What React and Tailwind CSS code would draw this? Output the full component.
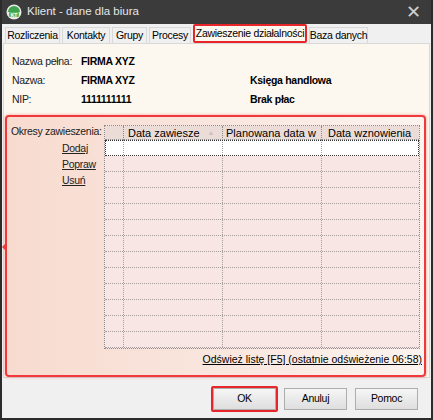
const tabs = [
  { label: "Rozliczenia", w: "w-[55px]" },
  { label: "Kontakty", w: "w-[48px]" },
  { label: "Grupy", w: "w-[35px]" },
  { label: "Procesy", w: "w-[42px]" },
  { label: "Zawieszenie działalności", w: "w-[114px]", active: true },
  { label: "Baza danych", w: "w-[59px]" },
];

const rows = Array.from({ length: 13 });

function AppIcon() {
  return (
    <svg width="16" height="16" viewBox="0 0 16 16">
      <circle cx="8" cy="8" r="7.5" fill="#e8e8e8" />
      <path d="M2 8a6 6 0 0 1 12 0z" fill="#3fa34d" />
      <rect x="3" y="8" width="10" height="5" rx="1" fill="#5cb85c" />
      <text x="8" y="12.5" fontSize="5" textAnchor="middle" fill="#fff" fontFamily="Liberation Sans, sans-serif" fontWeight="bold">
        KT
      </text>
    </svg>
  );
}

function Btn({ children, highlight }) {
  const inner = (
    <div className="flex h-[22px] w-[63px] items-center justify-center border border-[#adadad] bg-linear-to-b from-[#f6f6f6] to-[#dedede] text-[10.5px] text-black">
      {children}
    </div>
  );
  if (highlight) {
    return <div className="rounded-[2px] border-2 border-[#e8262a] p-0">{inner}</div>;
  }
  return <div className="p-[2px]">{inner}</div>;
}

export default function App() {
  return (
    <div
      className="flex h-[420px] w-[433px] flex-col whitespace-nowrap bg-[#2b2b2b] px-[2px] pb-[2px] tracking-[-0.3px]"
      style={{ fontFamily: '"Liberation Sans", Arial, sans-serif' }}
    >
      {/* title bar */}
      <div className="flex h-[24px] items-center bg-[#3b3b3b] pl-[4px] pr-[10px] tracking-normal">
        <AppIcon />
        <span className="ml-[5px] text-[11.5px] text-[#e6e6e6]">Klient - dane dla biura</span>
        <span className="ml-auto text-[18px] leading-none font-light text-[#cfcfcf]">✕</span>
      </div>

      <div className="flex flex-1 flex-col bg-[#f0f0f0]">
        {/* tabs */}
        <div className="flex h-[19px] items-end gap-[2px] pl-[3px] pt-[2px]">
          {tabs.map((t) =>
            t.active ? (
              <div
                key={t.label}
                className={`${t.w} flex h-[19px] items-center justify-center rounded-[2px] border-2 border-[#e8262a] bg-[#fdf8ef] text-[10.5px] text-black`}
              >
                {t.label}
              </div>
            ) : (
              <div
                key={t.label}
                className={`${t.w} flex h-[16px] items-center justify-center border border-b-0 border-[#d9d9d9] bg-[#f0f0f0] text-[10.5px] text-black`}
              >
                {t.label}
              </div>
            )
          )}
        </div>

        {/* content panel */}
        <div className="mx-[1px] flex h-[335px] flex-col border border-[#d9d9d9] bg-[#fdf8ef]">
          <div className="flex flex-col gap-[6px] pl-[8px] pt-[11px] text-[10.5px] text-[#222]">
            <div className="flex h-[13px] items-center">
              <span className="w-[69px]">Nazwa pełna:</span>
              <span className="font-bold text-black">FIRMA XYZ</span>
            </div>
            <div className="flex h-[13px] items-center">
              <span className="w-[69px]">Nazwa:</span>
              <span className="w-[169px] font-bold text-black">FIRMA XYZ</span>
              <span className="font-bold text-black">Księga handlowa</span>
            </div>
            <div className="flex h-[13px] items-center">
              <span className="w-[69px]">NIP:</span>
              <span className="w-[169px] font-bold text-black">1111111111</span>
              <span className="font-bold text-black">Brak płac</span>
            </div>
          </div>

          {/* highlighted suspension area */}
          <div className="relative mt-[9px] ml-[1px] mr-[3px] flex flex-1 flex-col rounded-[4px] border-2 border-[#f0393c] bg-linear-to-r from-[#f8dbcf] via-[#f9e6de] to-[#fcf4ef] shadow-[0_0_3px_rgba(240,57,60,0.5)]">
            <div className="absolute -left-[5px] top-[126px] h-0 w-0 border-y-[4px] border-r-[4px] border-y-transparent border-r-[#f0393c]" />
            <div className="flex pt-[8px]">
              <div className="flex w-[97px] flex-col pl-[4px] text-[10.5px] text-[#222]">
                <span className="h-[13px] leading-[13px]">Okresy zawieszenia:</span>
                <div className="mt-[4px] flex flex-col gap-[3px] pl-[51px]">
                  <span className="h-[13px] leading-[13px] underline">Dodaj</span>
                  <span className="h-[13px] leading-[13px] underline">Popraw</span>
                  <span className="h-[13px] leading-[13px] underline">Usuń</span>
                </div>
              </div>

              {/* grid */}
              <div className="flex w-[316px] flex-col border border-dotted border-[#8c8c8c] bg-[#f7e6e3] tracking-normal">
                <div className="grid h-[14px] grid-cols-[19px_99px_99px_1fr] border-b border-dotted border-[#8c8c8c] bg-[#ebdcd8] text-[11px] leading-[14px] text-black">
                  <div className="border-r border-dotted border-[#8c8c8c]" />
                  <div className="flex items-center border-r border-dotted border-[#8c8c8c] pl-[4px]">
                    Data zawiesze
                    <span className="ml-[8px] text-[7px] text-[#c9c0bd]">▲</span>
                  </div>
                  <div className="border-r border-dotted border-[#8c8c8c] pl-[3px]">Planowana data w</div>
                  <div className="pl-[6px]">Data wznowienia</div>
                </div>
                {rows.map((_, i) => (
                  <div
                    key={i}
                    className={`grid h-[16px] grid-cols-[19px_99px_99px_1fr] border-b border-dotted border-[#a8a0a0] ${
                      i === 0 ? "bg-white outline outline-1 outline-dotted -outline-offset-1 outline-[#333]" : ""
                    }`}
                  >
                    <div className="border-r border-dotted border-[#a8a0a0]" />
                    <div className="border-r border-dotted border-[#a8a0a0]" />
                    <div className="border-r border-dotted border-[#a8a0a0]" />
                    <div />
                  </div>
                ))}
              </div>
            </div>
            <div className="mt-auto flex justify-end pb-[7px] pr-[2px]">
              <span className="text-[10.5px] tracking-normal text-black underline">
                Odśwież listę [F5] (ostatnie odświeżenie 06:58)
              </span>
            </div>
          </div>
        </div>

        {/* buttons */}
        <div className="flex flex-1 items-center justify-end gap-[4px] pr-[11px] pt-[2px]">
          <Btn highlight>OK</Btn>
          <Btn>Anuluj</Btn>
          <Btn>Pomoc</Btn>
        </div>
      </div>
    </div>
  );
}
